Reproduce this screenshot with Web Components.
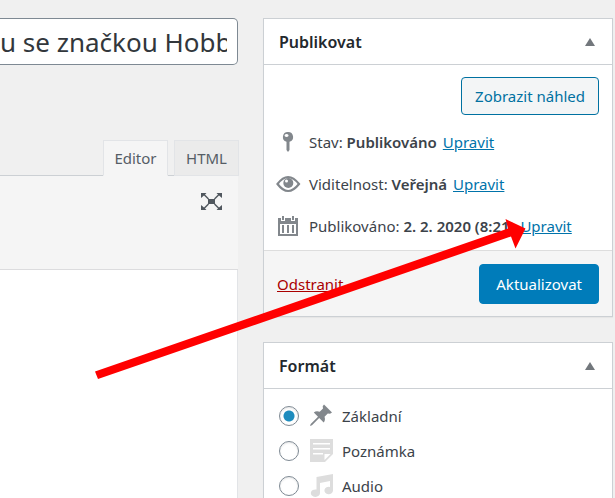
<!DOCTYPE html>
<html lang="cs">
<head>
<meta charset="utf-8">
<title>Upravit produkt</title>
<style>
  html { height: 100%; }
  body {
    margin: 0;
    height: 100%;
    overflow: hidden;
    background: #f0f0f0;
    color: #3c434a;
    font-family: "Noto Sans", "Open Sans", sans-serif;
    font-size: 15px;
    line-height: 20px;
  }
</style>
</head>
<body>
<edit-screen>
  <title-field slot="main"></title-field>
  <content-editor slot="main"></content-editor>

  <post-box slot="side" heading="Publikovat">
    <publish-actions></publish-actions>
  </post-box>
  <post-box slot="side" heading="Formát">
    <format-picker></format-picker>
  </post-box>

  <pointer-arrow slot="overlay"></pointer-arrow>
</edit-screen>

<script>
class EditScreen extends HTMLElement {
  constructor() {
    super();
    this.attachShadow({ mode: "open" }).innerHTML = `
      <style>
        :host {
          box-sizing: border-box;
          display: grid;
          grid-template-columns: minmax(0, 1fr) 350px;
          column-gap: 25px;
          height: 100%;
          padding: 18px 2px 0 0;
          position: relative;
        }
        main {
          display: flex;
          flex-direction: column;
          gap: 75px;
          min-height: 0;
        }
        aside {
          display: flex;
          flex-direction: column;
          gap: 25px;
        }
      </style>
      <main><slot name="main"></slot></main>
      <aside><slot name="side"></slot></aside>
      <slot name="overlay"></slot>`;
  }
}

class TitleField extends HTMLElement {
  constructor() {
    super();
    this.attachShadow({ mode: "open" }).innerHTML = `
      <style>
        :host { display: block; }
        input {
          box-sizing: border-box;
          display: block;
          width: 100%;
          height: 47px;
          margin: 0;
          padding: 0 10px 0 0;
          border: 1px solid #7e8993;
          border-left: 0;
          border-radius: 0 5px 5px 0;
          background: #fff;
          color: #32373c;
          font-family: inherit;
          font-size: 26px;
        }
      </style>
      <input type="text" aria-label="Název" value="u se značkou Hobb">`;
  }
}

class ContentEditor extends HTMLElement {
  constructor() {
    super();
    this.attachShadow({ mode: "open" }).innerHTML = `
      <style>
        :host {
          display: flex;
          flex: 1;
          flex-direction: column;
        }
        .tabs {
          display: flex;
          gap: 6px;
          justify-content: flex-end;
          margin-right: -1px;
          border-bottom: 1px solid #ccd0d4;
        }
        .tabs button {
          box-sizing: border-box;
          width: 65px;
          height: 36px;
          margin: 0 0 -1px;
          padding: 0;
          border: 1px solid #e2e4e7;
          background: #ebebeb;
          color: #555d66;
          font: inherit;
        }
        .tabs button.active {
          border-bottom-color: #f5f5f5;
          background: #f5f5f5;
        }
        .toolbar {
          box-sizing: border-box;
          display: flex;
          justify-content: flex-end;
          align-items: flex-start;
          height: 94px;
          padding: 14px 15px;
          border-bottom: 1px solid #dcdcde;
          background: #f5f5f5;
        }
        .toolbar button {
          margin: 0;
          padding: 0;
          border: 0;
          background: none;
        }
        svg { display: block; }
        .page {
          flex: 1;
          border-right: 1px solid #e2e4e7;
          background: #fff;
        }
      </style>
      <div class="tabs">
        <button class="active">Editor</button>
        <button>HTML</button>
      </div>
      <div class="toolbar">
        <button aria-label="Celá obrazovka">
          <svg width="23" height="23" viewBox="0 0 23 23" fill="#50575e">
            <path d="M1 3h5.500L5 4.500 9 8.500 8 9.500 4 5.500 1 8zM22 3v5l-3-2.500-4 4-1-1 4-4L16.500 3zM1 20v-5l3 2.500 4-4 1 1-4 4L6.500 20zM22 20h-5.500l1.500-1.500-4-4 1-1 4 4 3-2.500z"/>
            <path d="M8 9h7v5H8z"/>
          </svg>
        </button>
      </div>
      <div class="page"></div>`;
  }
}

class PostBox extends HTMLElement {
  constructor() {
    super();
    this.attachShadow({ mode: "open" }).innerHTML = `
      <style>
        :host {
          display: block;
          border: 1px solid #ccd0d4;
          background: #fff;
          box-shadow: 0 1px 1px rgba(0, 0, 0, 0.04);
        }
        header {
          display: flex;
          align-items: center;
          justify-content: space-between;
          height: 45px;
          padding: 0 15px;
          border-bottom: 1px solid #ccd0d4;
        }
        h2 {
          margin: 0;
          color: #23282d;
          font-size: 16px;
          font-weight: 600;
        }
        button {
          display: flex;
          margin: 0;
          padding: 2px;
          border: 0;
          background: none;
        }
      </style>
      <header>
        <h2></h2>
        <button aria-label="Přepnout panel">
          <svg width="10" height="8" viewBox="0 0 10 8" fill="#72777c"><path d="M5 0l5 8H0z"/></svg>
        </button>
      </header>
      <slot></slot>`;
    this.shadowRoot.querySelector("h2").textContent = this.getAttribute("heading");
  }
}

class PublishActions extends HTMLElement {
  constructor() {
    super();
    this.attachShadow({ mode: "open" }).innerHTML = `
      <style>
        :host { display: block; }
        .preview {
          display: flex;
          justify-content: flex-end;
          padding: 12px 13px 6px;
        }
        button {
          box-sizing: border-box;
          margin: 0;
          padding: 0 13px;
          border: 1px solid #0071a1;
          border-radius: 4px;
          background: #f3f5f6;
          color: #0071a1;
          font: inherit;
          height: 38px;
        }
        button.primary {
          height: 40px;
          padding: 0 16px;
          border-color: #007cba;
          background: #007cba;
          color: #fff;
        }
        ul {
          margin: 0;
          padding: 0 0 3px 12px;
          list-style: none;
        }
        li {
          display: flex;
          align-items: center;
          gap: 8px;
          height: 42px;
          white-space: nowrap;
        }
        b { font-weight: 600; }
        a { color: #0073aa; }
        li a { margin-left: 2px; }
        a.delete { color: #a00; }
        footer {
          display: flex;
          align-items: center;
          justify-content: space-between;
          padding: 13px 13px 12px;
          border-top: 1px solid #ddd;
          background: #f5f5f5;
        }
      </style>
      <div class="preview"><button>Zobrazit náhled</button></div>
      <ul>
        <li>
          <svg width="25" height="24" viewBox="0 0 25 24" fill="#82878c">
            <path fill-rule="evenodd" d="M12 2a5 5 0 0 1 1.500 9.800V20L12 22l-1.500-2V11.800A5 5 0 0 1 12 2zM10.500 4a2 1.500 0 1 0 .1 0z"/>
          </svg>
          <span>Stav: <b>Publikováno</b> <a href="#stav">Upravit</a></span>
        </li>
        <li>
          <svg width="25" height="24" viewBox="0 0 25 24">
            <path d="M1.500 12Q12-2 23 12 12 26 1.500 12z" fill="#fff" stroke="#82878c" stroke-width="2.200"/>
            <circle cx="12.300" cy="11" r="5" fill="#82878c"/>
            <circle cx="10.500" cy="9" r="1.500" fill="#fff"/>
          </svg>
          <span>Viditelnost: <b>Veřejná</b> <a href="#viditelnost">Upravit</a></span>
        </li>
        <li>
          <svg width="25" height="24" viewBox="0 0 25 24" fill="#82878c">
            <path fill-rule="evenodd" d="M2 4h20v18H2zM4 10v10h16V10z"/>
            <path d="M5 1h4v6H5zM15 1h4v6h-4z" fill="#fff"/>
            <path d="M6 2h2v4H6zM16 2h2v4h-2zM6 11h2v8H6zM11 11h2v8h-2zM16 11h2v8h-2z"/>
          </svg>
          <span>Publikováno: <b>2. 2. 2020 (8:21)</b> <a href="#datum">Upravit</a></span>
        </li>
      </ul>
      <footer>
        <a class="delete" href="#odstranit">Odstranit</a>
        <button class="primary">Aktualizovat</button>
      </footer>`;
  }
}

class FormatPicker extends HTMLElement {
  constructor() {
    super();
    this.attachShadow({ mode: "open" }).innerHTML = `
      <style>
        :host {
          display: block;
          padding: 9px 15px;
        }
        label {
          display: flex;
          align-items: center;
          height: 35px;
        }
        input {
          appearance: none;
          box-sizing: border-box;
          width: 20px;
          height: 20px;
          margin: 0 10px 0 0;
          border: 1px solid #7e8993;
          border-radius: 50%;
          background: #fff;
          box-shadow: inset 0 1px 2px rgba(0, 0, 0, 0.1);
        }
        input:checked {
          background: radial-gradient(circle, #1e8cbe 5px, #fff 6px);
        }
        svg {
          margin-right: 8px;
          fill: #ddd;
        }
        input:checked + svg { fill: #82878c; }
      </style>
      <label>
        <input type="radio" name="format" checked>
        <svg width="25" height="24" viewBox="0 0 25 24">
          <path d="M15 .5l8 8-2 1.300-2.200-.3-3.300 3.300c.8 2.200.6 4.200-.8 5.700l-4.500-4.500L3 21.300 1 22l.7-2 7.300-7.300-4.200-4.200c1.600-1.400 3.800-1.500 5.900-.7L14 4.500l-.3-2.200z"/>
        </svg>
        Základní
      </label>
      <label>
        <input type="radio" name="format">
        <svg width="25" height="24" viewBox="0 0 25 24">
          <path fill-rule="evenodd" d="M1 0h23v15l-8 8H1zM4 4v1.500h17V4zM4 9v1.500h17V9zM4 14v1.500h10V14zM15.500 15v6l6-6z"/>
        </svg>
        Poznámka
      </label>
      <label>
        <input type="radio" name="format">
        <svg width="25" height="24" viewBox="0 0 25 24">
          <path d="M7.500 3L24 0v16.500a4.300 3.800 0 1 1-3-3.600V7l-10 2v10a4.600 3.800 0 1 1-3.500-3.500z"/>
        </svg>
        Audio
      </label>`;
  }
}

class PointerArrow extends HTMLElement {
  constructor() {
    super();
    this.attachShadow({ mode: "open" }).innerHTML = `
      <style>
        :host {
          position: absolute;
          top: 218px;
          right: 89px;
          pointer-events: none;
        }
        svg { display: block; }
      </style>
      <svg width="431" height="162" viewBox="0 0 431 162" fill="#f00">
        <path d="M0 153.500L413 10.500 410.500 1 430.500 10.500 420.500 30.500 416 18.500 3 161z"/>
      </svg>`;
  }
}

customElements.define("edit-screen", EditScreen);
customElements.define("title-field", TitleField);
customElements.define("content-editor", ContentEditor);
customElements.define("post-box", PostBox);
customElements.define("publish-actions", PublishActions);
customElements.define("format-picker", FormatPicker);
customElements.define("pointer-arrow", PointerArrow);
</script>
</body>
</html>
